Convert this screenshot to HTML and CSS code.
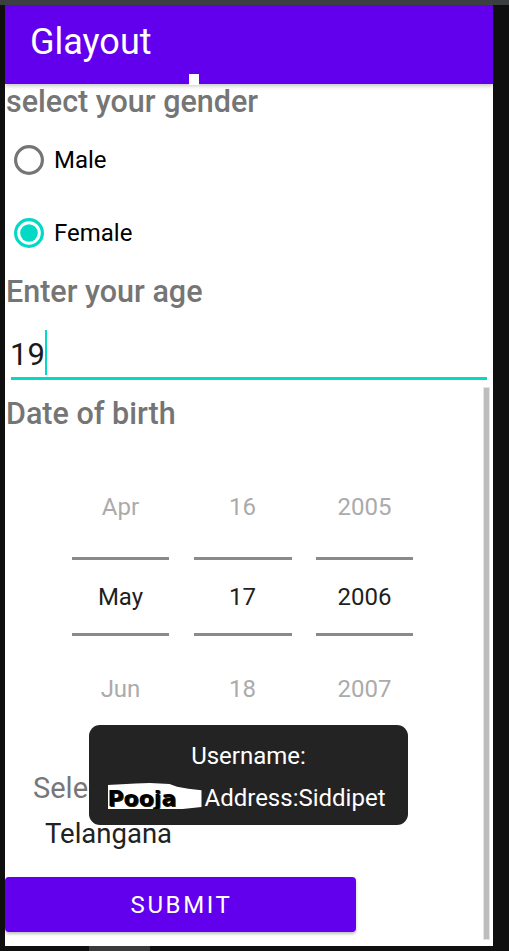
FILE: index.html
```html
<!DOCTYPE html>
<html>
<head>
<meta charset="utf-8">
<link rel="stylesheet" href="styles.css">
</head>
<body>
<div class="topstrip"></div>
<div class="device">
  <div class="screen">
    <header class="appbar"><span class="title">Glayout</span></header>
    <div class="notch"></div>

    <div class="content">
      <div class="heading">select your gender</div>
      <div class="radio-group">
        <label class="radio-row">
          <svg class="radio" width="30" height="30" viewBox="0 0 30 30"><circle cx="15" cy="15" r="13.4" fill="none" stroke="#757575" stroke-width="3.2"/></svg>
          <span class="radio-label">Male</span>
        </label>
        <label class="radio-row">
          <svg class="radio" width="30" height="30" viewBox="0 0 30 30"><circle cx="15" cy="15" r="13.4" fill="none" stroke="#03dac5" stroke-width="3.2"/><circle cx="15" cy="15" r="8.8" fill="#03dac5"/></svg>
          <span class="radio-label">Female</span>
        </label>
      </div>

      <div class="heading heading-age">Enter your age</div>
      <div class="edit">
        <span class="edit-text">19</span><span class="cursor"></span>
      </div>

      <div class="heading heading-dob">Date of birth</div>
      <div class="picker">
        <div class="picker-col">
          <div class="pk pk-prev">Apr</div>
          <div class="pk pk-cur">May</div>
          <div class="pk pk-next">Jun</div>
        </div>
        <div class="picker-col">
          <div class="pk pk-prev">16</div>
          <div class="pk pk-cur">17</div>
          <div class="pk pk-next">18</div>
        </div>
        <div class="picker-col">
          <div class="pk pk-prev">2005</div>
          <div class="pk pk-cur">2006</div>
          <div class="pk pk-next">2007</div>
        </div>
      </div>

      <div class="state-label">Select your state</div>
      <div class="spinner-item">Telangana</div>

      <button class="submit">SUBMIT</button>
    </div>

    <div class="scrollbar"></div>

    <div class="toast">
      <div class="toast-line">Username:</div>
      <div class="toast-line toast-line2"><span class="redact">Pooja</span>Address:Siddipet</div>
    </div>
  </div>
  <div class="rightstrip"></div>
</div>
<div class="bottomstrip"><div class="navblock"></div></div>
</body>
</html>
```
FILE: styles.css
```css
html, body {
  margin: 0;
  padding: 0;
}
body {
  background: #0f0f0f;
  width: 509px;
  height: 951px;
  overflow: hidden;
  font-family: Roboto, "Noto Sans", sans-serif;
}
.topstrip {
  height: 5px;
  background: #3c3f41;
}
.device {
  display: flex;
  padding-left: 5px;
}
.screen {
  position: relative;
  width: 488px;
  height: 941px;
  background: #ffffff;
  overflow: hidden;
}
.appbar {
  position: relative;
  z-index: 2;
  height: 79px;
  background: #6200ee;
  padding: 16px 0 0 25px;
  box-sizing: border-box;
  box-shadow: 0 2px 4px rgba(0, 0, 0, 0.22);
}
.title {
  color: #ffffff;
  font-size: 36px;
  line-height: normal;
}
.notch {
  position: absolute;
  z-index: 3;
  left: 184px;
  top: 69px;
  width: 10px;
  height: 11px;
  background: #ffffff;
}
.content {
  display: flex;
  flex-direction: column;
  align-items: flex-start;
}
.heading {
  font-size: 30.5px;
  font-weight: 500;
  color: #757575;
  line-height: 36px;
  padding-left: 1px;
}
.radio-group {
  margin-top: 3px;
  display: flex;
  flex-direction: column;
}
.radio-row {
  height: 73px;
  display: flex;
  align-items: center;
  padding-left: 9px;
}
.radio {
  display: block;
}
.radio-label {
  margin-left: 10px;
  font-size: 24px;
  color: #000000;
}
.heading-age {
  margin-top: 5px;
}
.edit {
  margin-top: 20px;
  margin-left: 6px;
  width: 476px;
  line-height: 45px;
  padding-bottom: 2px;
  border-bottom: 3px solid #03dac5;
  font-size: 31px;
  color: #1a1a1a;
  height: 45px;
}
.edit-text {
  vertical-align: baseline;
  margin-left: -1px;
}
.cursor {
  display: inline-block;
  width: 2px;
  height: 45px;
  background: #03dac5;
  vertical-align: -10px;
  margin-left: 0;
}
.heading-dob {
  margin-top: 16px;
}
.picker {
  margin-top: 25px;
  margin-left: 67px;
  display: grid;
  grid-template-columns: 97px 98px 97px;
  column-gap: 24.5px;
}
.picker-col {
  display: flex;
  flex-direction: column;
}
.pk {
  text-align: center;
  font-size: 24px;
}
.pk-prev {
  line-height: 100px;
  color: #ababab;
}
.pk-cur {
  border-top: 3px solid #8a8a8a;
  border-bottom: 3px solid #8a8a8a;
  padding-top: 2px;
  line-height: 71px;
  color: #1f1f1f;
}
.pk-next {
  line-height: 106px;
  color: #ababab;
}
.state-label {
  margin-top: 28px;
  margin-left: 28px;
  font-size: 29px;
  line-height: 36px;
  color: #777777;
  white-space: nowrap;
}
.spinner-item {
  margin-top: 10px;
  margin-left: 40px;
  font-size: 27.5px;
  line-height: 36px;
  color: #222222;
}
.submit {
  margin-top: 25px;
  width: 351px;
  height: 55px;
  padding: 2px 0 0 2px;
  border: none;
  border-radius: 4px;
  background: #6200ee;
  color: #ffffff;
  font-family: Roboto, sans-serif;
  font-size: 24px;
  font-weight: 400;
  letter-spacing: 2.6px;
  line-height: 53px;
  box-shadow: 0 2px 3px rgba(0, 0, 0, 0.25);
}
.scrollbar {
  position: absolute;
  left: 478px;
  top: 382px;
  width: 5px;
  height: 551px;
  background: #bdbdbd;
  border: 1px solid #e4e4e4;
}
.toast {
  position: absolute;
  z-index: 4;
  left: 84px;
  top: 720px;
  width: 319px;
  height: 100px;
  box-sizing: border-box;
  padding-top: 10px;
  border-radius: 11px;
  background: #232323;
  color: #ffffff;
  text-align: center;
  font-size: 24px;
}
.toast-line {
  line-height: 42px;
  white-space: nowrap;
}
.toast-line2 {
  padding-right: 4px;
}
.redact {
  display: inline-block;
  box-sizing: border-box;
  width: 94px;
  height: 26px;
  padding-top: 6px;
  line-height: 20px;
  margin-right: 3px;
  text-align: left;
  background: #ffffff;
  color: #000000;
  font-family: "DejaVu Sans", sans-serif;
  font-weight: 700;
  font-size: 22px;
  text-shadow: 1px 1px 0 #2a2200;
  clip-path: polygon(0 8%, 30% 2%, 45% 0, 66% 4%, 74% 14%, 86% 22%, 100% 28%, 100% 92%, 80% 100%, 0 100%);
}
.rightstrip {
  flex: 1;
}
.bottomstrip {
  height: 5px;
  background: #0f0f0f;
  position: relative;
}
.navblock {
  margin-left: 89px;
  width: 61px;
  height: 5px;
  background: #3a3a3a;
}
```
